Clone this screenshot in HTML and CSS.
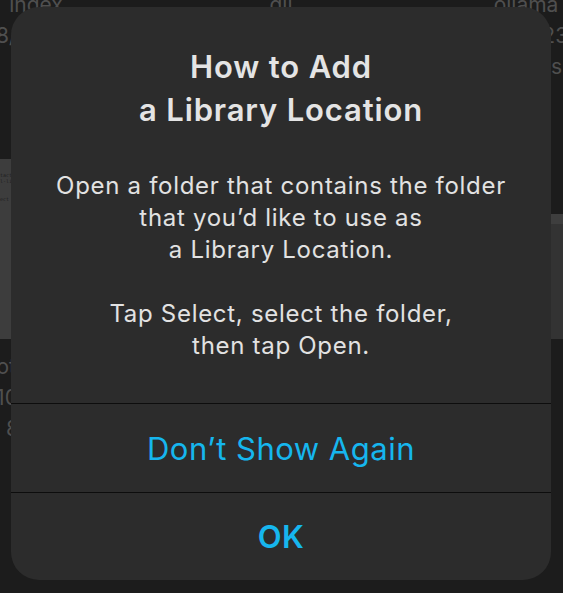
FILE: index.html
```html
<!DOCTYPE html>
<html lang="en">
<head>
<meta charset="utf-8">
<title>How to Add a Library Location</title>
<link rel="stylesheet" href="styles.css">
</head>
<body>
<div class="browser">
  <div class="grid">
    <div class="item">
      <div class="thumb-area"></div>
      <div class="label name">index</div>
      <div class="label">8/24/23</div>
      <div class="label">1 KB</div>
    </div>
    <div class="item">
      <div class="thumb-area"></div>
      <div class="label name">dll</div>
      <div class="label">9/12/23</div>
      <div class="label">12 items</div>
    </div>
    <div class="item">
      <div class="thumb-area"></div>
      <div class="label name">ollama</div>
      <div class="label">10/19/23</div>
      <div class="label">3 items</div>
    </div>
    <div class="item">
      <div class="thumb-area"><div class="thumb thumb-doc"><span>contact</span><span>mail-list</span><span>me</span><span>&nbsp;</span><span>object p</span></div></div>
      <div class="label name">notes logo</div>
      <div class="label">10/11/23</div>
      <div class="label">80 KB</div>
    </div>
    <div class="item">
      <div class="thumb-area"><div class="thumb thumb-mid"></div></div>
      <div class="label name">readme</div>
      <div class="label">10/2/23</div>
      <div class="label">4 KB</div>
    </div>
    <div class="item">
      <div class="thumb-area"><div class="thumb thumb-wide"></div></div>
      <div class="label name">osm</div>
      <div class="label">map</div>
      <div class="label">2 KB</div>
    </div>
  </div>
</div>

<div class="alert" role="alertdialog">
  <div class="alert-message">
    <h1 class="alert-title">How to Add<br>a Library Location</h1>
    <p class="alert-text">Open a folder that contains the folder<br>that you’d like to use as<br>a Library Location.</p>
    <p class="alert-text">Tap Select, select the folder,<br>then tap Open.</p>
  </div>
  <button class="alert-btn">Don’t Show Again</button>
  <button class="alert-btn alert-btn-bold">OK</button>
</div>
</body>
</html>
```

FILE: styles.css
```css
html, body {
  margin: 0;
  padding: 0;
  width: 563px;
  height: 593px;
  overflow: hidden;
  background: #1c1c1c;
  font-family: Inter, "Noto Sans", sans-serif;
}

.browser {
  width: 563px;
  height: 593px;
  overflow: hidden;
}

.grid {
  display: grid;
  grid-template-columns: repeat(3, 200px);
  column-gap: 45px;
  row-gap: 77px;
  margin-top: -203px;
  margin-left: -64px;
}

.item {
  display: flex;
  flex-direction: column;
  align-items: center;
}

.thumb-area {
  height: 180px;
  width: 100%;
  display: flex;
  align-items: flex-end;
  justify-content: center;
  margin-bottom: 12px;
}

.thumb {
  background: #3a3a3a;
}

.thumb-doc {
  width: 150px;
  height: 180px;
  background: #3d3d3d;
  box-sizing: border-box;
  display: flex;
  flex-direction: column;
  align-items: flex-start;
  padding-top: 13px;
  padding-left: 30px;
  font-family: "DejaVu Sans Mono", monospace;
  font-size: 5px;
  line-height: 6px;
  color: #1e1e1e;
}

.thumb-mid {
  width: 150px;
  height: 150px;
}

.thumb-wide {
  width: 170px;
  height: 125px;
  background: #333333;
  border-top: 10px solid #3e3e3e;
  box-sizing: border-box;
}

.label {
  font-size: 21px;
  line-height: 31px;
  color: #4f4f4f;
  white-space: nowrap;
}

.alert {
  position: absolute;
  left: 11px;
  top: 7px;
  width: 540px;
  height: 573px;
  border-radius: 28px;
  background: #2c2c2c;
  display: flex;
  flex-direction: column;
  overflow: hidden;
}

.alert-message {
  height: 396px;
  box-sizing: border-box;
  padding-top: 38px;
  text-align: center;
}

.alert-title {
  margin: 0 0 39px;
  font-size: 31px;
  line-height: 43px;
  font-weight: 600;
  color: #e4e4e4;
  letter-spacing: 0.85px;
}

.alert-text {
  margin: 0 0 32px;
  font-size: 24px;
  line-height: 32px;
  font-weight: 400;
  color: #e2e2e2;
  letter-spacing: 0.7px;
}

.alert-btn {
  display: flex;
  align-items: center;
  justify-content: center;
  margin: 0;
  padding: 0;
  border: 0;
  border-top: 1px solid #0d0d0d;
  background: transparent;
  height: 89px;
  font-family: Inter, "Noto Sans", sans-serif;
  font-size: 31px;
  font-weight: 400;
  color: #16b6ee;
  letter-spacing: 0.5px;
}

.alert-btn-bold {
  height: 88px;
  font-weight: 600;
}
```
